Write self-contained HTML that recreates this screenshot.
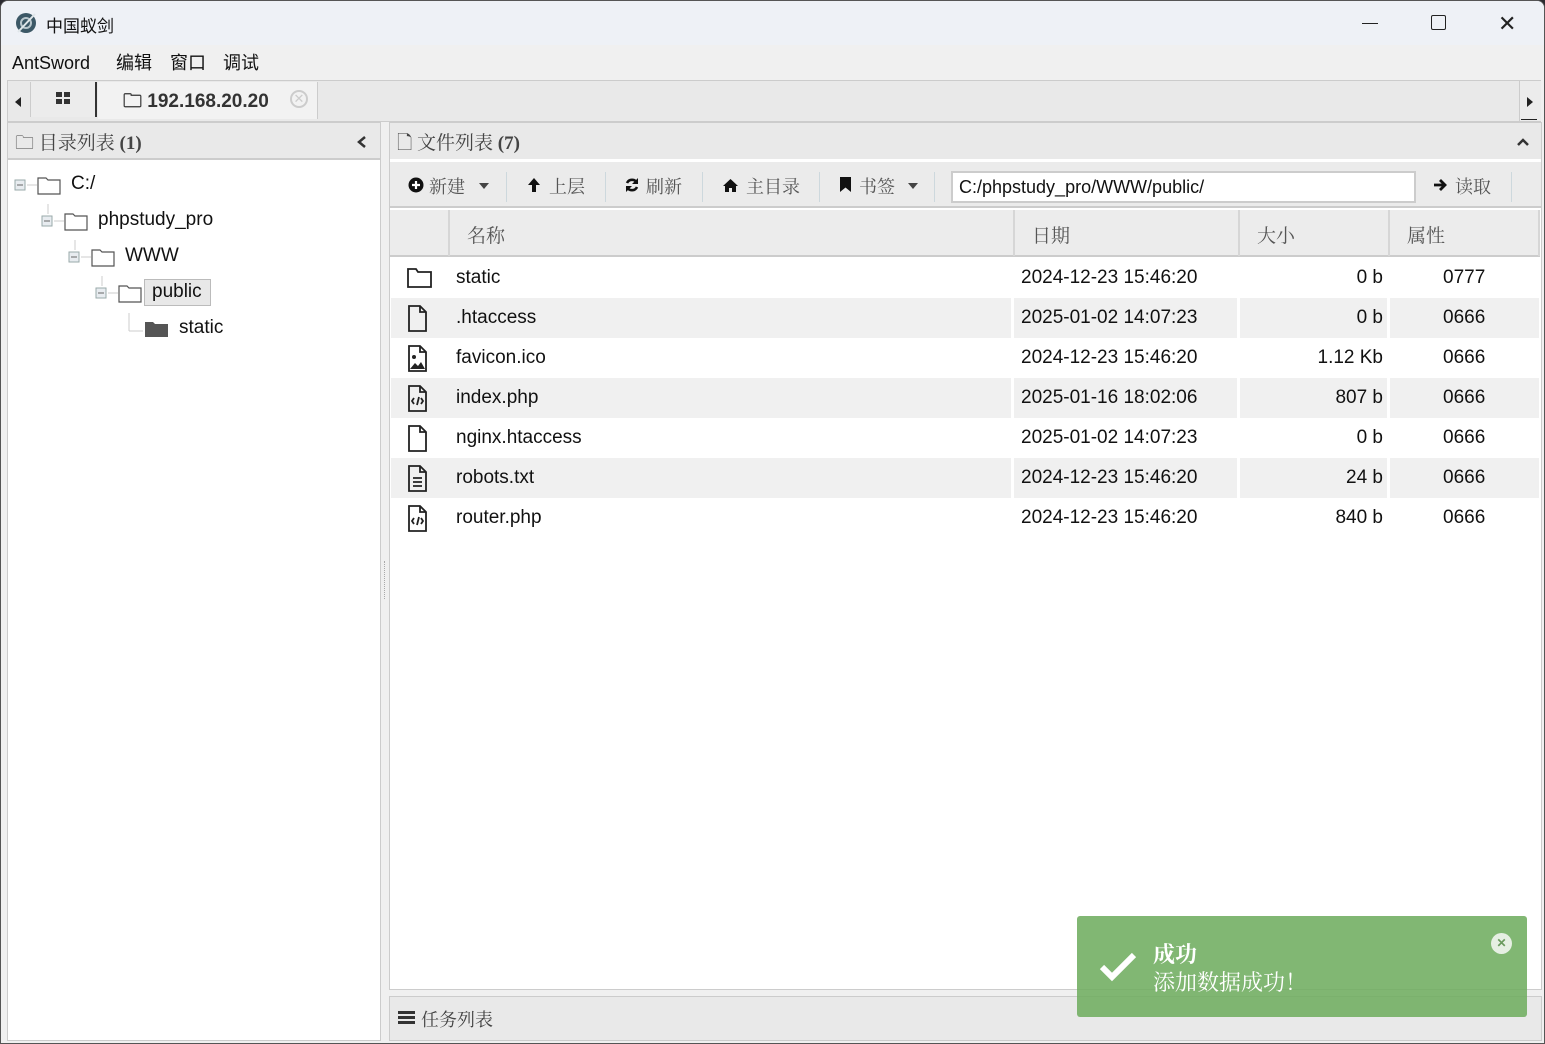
<!DOCTYPE html>
<html><head><meta charset="utf-8"><style>
*{box-sizing:border-box;margin:0;padding:0}
body{width:1545px;height:1044px;overflow:hidden;background:#2b2b30;font-family:"Liberation Sans","Noto Sans CJK SC",sans-serif;position:relative}
.a{position:absolute}
.win{left:0;top:0;width:1545px;height:1044px;background:#f0f0f0;border-radius:8px 8px 0 0;overflow:hidden;border:1px solid #555}
.serif{font-family:"Liberation Serif","Noto Serif CJK SC",serif}
.row{position:absolute;left:390px;width:1148px;height:40px;font-size:19px;color:#111}
.row span{position:absolute;top:9px}
.g{background:#f0f0f0}
.row .sep{top:0;width:3px;height:40px;background:#fff}
.m{position:absolute;top:50px;font-size:18px;line-height:24px;height:24px;color:#111}
</style></head><body>
<div class="a win">
<div class="a" style="left:0;top:0;width:1545px;height:44px;background:#eef1f6"></div>
<svg class="a" style="left:13px;top:10px" width="24" height="24" viewBox="0 0 24 24"><circle cx="12" cy="12" r="10" fill="#3c5866"/><circle cx="12" cy="12" r="5" fill="none" stroke="#b8c6cc" stroke-width="2"/><line x1="4" y1="21" x2="21" y2="3" stroke="#dfe6e9" stroke-width="2"/></svg>
<div class="a" style="left:45px;top:11px;font-size:17px;color:#111">中国蚁剑</div>
<div class="a" style="left:1361px;top:22px;width:16px;height:1px;background:#222"></div>
<div class="a" style="left:1430px;top:14px;width:15px;height:15px;border:1.5px solid #222;border-radius:2px"></div>
<div class="a" style="left:1497px;top:10px;font-size:22px;color:#222;font-weight:300">✕</div>
<div class="m" style="left:11px">AntSword</div>
<div class="m" style="left:115px">编辑</div>
<div class="m" style="left:169px">窗口</div>
<div class="m" style="left:222px">调试</div>
<div class="a" style="left:6px;top:79px;width:1534px;height:42px;background:#e9e9e9;border:1px solid #ccc"></div>
<div class="a" style="left:14px;top:96px;width:0;height:0;border-top:5px solid transparent;border-bottom:5px solid transparent;border-right:6px solid #222"></div>
<div class="a" style="left:29px;top:81px;width:67px;height:35px;background:#ececec;border-right:2px solid #333;border-left:1px solid #ccc"></div>
<div class="a" style="left:55px;top:91px;width:14px;height:12px;background:linear-gradient(90deg,#333 6px,transparent 6px,transparent 8px,#333 8px)"><div style="position:absolute;top:5px;left:0;width:14px;height:2px;background:#ececec"></div></div>
<div class="a" style="left:97px;top:81px;width:220px;height:37px;background:#f2f2f2;border-right:1px solid #ccc"></div>
<div class="a" style="left:122px;top:86px;font-size:19px;font-weight:bold;color:#333">🗀 192.168.20.20</div>
<div class="a" style="left:289px;top:89px;width:18px;height:18px;border:2px solid #ccc;border-radius:50%;color:#ccc;font-size:13px;line-height:14px;text-align:center">✕</div>
<div class="a" style="left:1518px;top:80px;width:22px;height:40px;border-left:1px solid #ccc;background:#ececec"></div>
<div class="a" style="left:1526px;top:96px;width:0;height:0;border-top:5px solid transparent;border-bottom:5px solid transparent;border-left:6px solid #222"></div>
<div class="a" style="left:1520px;top:118px;width:16px;height:1px;background:#222"></div>
<div class="a" style="left:6px;top:121px;width:374px;height:919px;border:1px solid #ccc;background:#fff"></div>
<div class="a serif" style="left:7px;top:122px;width:372px;height:37px;background:#e9e9e9;border-bottom:2px solid #ccc"></div>
<div class="a serif" style="left:14px;top:127px;font-size:19px;color:#444">🗀 目录列表 <b>(1)</b></div>
<svg class="a" style="left:355px;top:134px" width="12" height="14"><path d="M9 2L3 7l6 5" fill="none" stroke="#333" stroke-width="2.5"/></svg>
<svg class="a" style="left:0;top:160px" width="380" height="190">
<g fill="none" stroke="#ccc"><line x1="26" y1="24" x2="36" y2="24"/><line x1="47" y1="43" x2="47" y2="53"/><line x1="53" y1="60" x2="63" y2="60"/><line x1="74" y1="79" x2="74" y2="89"/><line x1="80" y1="96" x2="90" y2="96"/><line x1="101" y1="115" x2="101" y2="125"/><line x1="107" y1="132" x2="117" y2="132"/><line x1="128" y1="152" x2="128" y2="170"/><line x1="128" y1="170" x2="142" y2="170"/></g>
<g fill="#e8ecf0" stroke="#9aa"><rect x="14" y="19" width="10" height="10"/><rect x="41" y="55" width="10" height="10"/><rect x="68" y="91" width="10" height="10"/><rect x="95" y="127" width="10" height="10"/></g>
<g stroke="#666"><line x1="16" y1="24" x2="22" y2="24"/><line x1="43" y1="60" x2="49" y2="60"/><line x1="70" y1="96" x2="76" y2="96"/><line x1="97" y1="132" x2="103" y2="132"/></g>
<g fill="#fff" stroke="#555" stroke-width="1.2"><path d="M37 17h8l2 2h12v14h-22z"/><path d="M64 53h8l2 2h12v14h-22z"/><path d="M91 89h8l2 2h12v14h-22z"/><path d="M118 125h8l2 2h12v14h-22z"/></g>
<path d="M144 161h8l2 2h13v13h-23z" fill="#555"/>
</svg>
<div class="a" style="left:70px;top:172px;font-size:19px;color:#111">C:/</div>
<div class="a" style="left:97px;top:208px;font-size:19px;color:#111">phpstudy_pro</div>
<div class="a" style="left:124px;top:244px;font-size:19px;color:#111">WWW</div>
<div class="a" style="left:143px;top:278px;width:67px;height:27px;background:#e8e8e8;border:1px solid #bbb"></div>
<div class="a" style="left:151px;top:280px;font-size:19px;color:#111">public</div>
<div class="a" style="left:178px;top:316px;font-size:19px;color:#111">static</div>
<div class="a" style="left:383px;top:560px;width:2px;height:38px;border-left:1px dotted #aaa"></div>
<div class="a" style="left:388px;top:121px;width:1153px;height:868px;border:1px solid #ccc;background:#fff"></div>
<div class="a" style="left:389px;top:122px;width:1151px;height:36px;background:#e9e9e9"></div>
<div class="a serif" style="left:396px;top:127px;font-size:19px;color:#444">🗋 文件列表 <b>(7)</b></div>
<svg class="a" style="left:1515px;top:136px" width="14" height="10"><path d="M2 8l5-5 5 5" fill="none" stroke="#333" stroke-width="2.5"/></svg>
<div class="a" style="left:389px;top:158px;width:1151px;height:3px;background:#fff"></div>
<div class="a" style="left:389px;top:161px;width:1151px;height:46px;background:#ebebeb;border-bottom:2px solid #ccc"></div>
<svg class="a" style="left:407px;top:176px" width="16" height="16"><circle cx="8" cy="8" r="7.5" fill="#111"/><path d="M4 8h8M8 4v8" stroke="#fff" stroke-width="2.2"/></svg>
<div class="a serif" style="left:428px;top:172px;font-size:18px;color:#555">新建</div>
<div class="a" style="left:478px;top:182px;width:0;height:0;border-left:5px solid transparent;border-right:5px solid transparent;border-top:6px solid #444"></div>
<div class="a" style="left:505px;top:171px;width:1px;height:30px;background:#cdd8dd"></div>
<svg class="a" style="left:525px;top:176px" width="16" height="16"><path d="M8 1L2 8h4v7h4V8h4z" fill="#111"/></svg>
<div class="a serif" style="left:548px;top:172px;font-size:18px;color:#555">上层</div>
<div class="a" style="left:604px;top:171px;width:1px;height:30px;background:#cdd8dd"></div>
<svg class="a" style="left:623px;top:176px" width="16" height="16"><path d="M13 6A5.5 5.5 0 0 0 3 6M3 10a5.5 5.5 0 0 0 10 0" fill="none" stroke="#111" stroke-width="2.6"/><path d="M14 1v6h-6z M2 15v-6h6z" fill="#111"/></svg>
<div class="a serif" style="left:645px;top:172px;font-size:18px;color:#555">刷新</div>
<div class="a" style="left:701px;top:171px;width:1px;height:30px;background:#cdd8dd"></div>
<svg class="a" style="left:721px;top:177px" width="17" height="14"><path d="M8.5 1L1 8h2v6h4v-4h3v4h4V8h2z" fill="#111"/></svg>
<div class="a serif" style="left:745px;top:172px;font-size:18px;color:#555">主目录</div>
<div class="a" style="left:818px;top:171px;width:1px;height:30px;background:#cdd8dd"></div>
<div class="a" style="left:839px;top:176px;width:11px;height:15px;background:#111;clip-path:polygon(0 0,100% 0,100% 100%,50% 70%,0 100%)"></div>
<div class="a serif" style="left:858px;top:172px;font-size:18px;color:#555">书签</div>
<div class="a" style="left:907px;top:182px;width:0;height:0;border-left:5px solid transparent;border-right:5px solid transparent;border-top:6px solid #444"></div>
<div class="a" style="left:933px;top:171px;width:1px;height:30px;background:#cdd8dd"></div>
<div class="a" style="left:950px;top:170px;width:465px;height:32px;background:#fff;border:2px solid #ccc;font-size:18px;color:#111;padding:4px 6px">C:/phpstudy_pro/WWW/public/</div>
<svg class="a" style="left:1432px;top:177px" width="16" height="14"><path d="M1 7h9M7 2l5 5-5 5" fill="none" stroke="#111" stroke-width="2.8"/></svg>
<div class="a serif" style="left:1454px;top:172px;font-size:18px;color:#555">读取</div>
<div class="a" style="left:1510px;top:171px;width:1px;height:30px;background:#cdd8dd"></div>
<div class="a" style="left:389px;top:209px;width:1150px;height:47px;background:#ececec;border-bottom:2px solid #ccc"></div>
<div class="a" style="left:447px;top:209px;width:2px;height:46px;background:#d6d6d6"></div>
<div class="a" style="left:1012px;top:209px;width:2px;height:46px;background:#d6d6d6"></div>
<div class="a" style="left:1237px;top:209px;width:2px;height:46px;background:#d6d6d6"></div>
<div class="a" style="left:1387px;top:209px;width:2px;height:46px;background:#d6d6d6"></div>
<div class="a" style="left:1537px;top:209px;width:2px;height:46px;background:#d6d6d6"></div>
<div class="a serif" style="left:466px;top:220px;font-size:19px;color:#555">名称</div>
<div class="a serif" style="left:1031px;top:220px;font-size:19px;color:#555">日期</div>
<div class="a serif" style="left:1256px;top:220px;font-size:19px;color:#555">大小</div>
<div class="a serif" style="left:1406px;top:220px;font-size:19px;color:#555">属性</div>
<div class="row" style="top:257px"><span style="left:65px">static</span><span style="left:630px">2024-12-23 15:46:20</span><span style="right:156px">0 b</span><span style="left:1052px">0777</span></div>
<div class="row g" style="top:297px"><div class="a sep" style="left:620px"></div><div class="a sep" style="left:846px"></div><div class="a sep" style="left:996px"></div><span style="left:65px">.htaccess</span><span style="left:630px">2025-01-02 14:07:23</span><span style="right:156px">0 b</span><span style="left:1052px">0666</span></div>
<div class="row" style="top:337px"><span style="left:65px">favicon.ico</span><span style="left:630px">2024-12-23 15:46:20</span><span style="right:156px">1.12 Kb</span><span style="left:1052px">0666</span></div>
<div class="row g" style="top:377px"><div class="a sep" style="left:620px"></div><div class="a sep" style="left:846px"></div><div class="a sep" style="left:996px"></div><span style="left:65px">index.php</span><span style="left:630px">2025-01-16 18:02:06</span><span style="right:156px">807 b</span><span style="left:1052px">0666</span></div>
<div class="row" style="top:417px"><span style="left:65px">nginx.htaccess</span><span style="left:630px">2025-01-02 14:07:23</span><span style="right:156px">0 b</span><span style="left:1052px">0666</span></div>
<div class="row g" style="top:457px"><div class="a sep" style="left:620px"></div><div class="a sep" style="left:846px"></div><div class="a sep" style="left:996px"></div><span style="left:65px">robots.txt</span><span style="left:630px">2024-12-23 15:46:20</span><span style="right:156px">24 b</span><span style="left:1052px">0666</span></div>
<div class="row" style="top:497px"><span style="left:65px">router.php</span><span style="left:630px">2024-12-23 15:46:20</span><span style="right:156px">840 b</span><span style="left:1052px">0666</span></div>
<svg class="a" style="left:400px;top:257px" width="40" height="280" fill="none" stroke="#222" stroke-width="1.8">
<path d="M7 11h8l2 3h13v15h-23z"/>
<path d="M8 48h11l6 6v19h-17z M19 48v6h6"/>
<path d="M8 88h11l6 6v19h-17z M19 88v6h6"/><circle cx="13" cy="99" r="2" fill="#222" stroke="none"/><path d="M9 111l5-6 3 3 3-4 4 7z" fill="#222" stroke="none"/>
<path d="M8 128h11l6 6v19h-17z M19 128v6h6 M13 140l-2 3 2 3 M20 140l2 3-2 3 M18 139l-2 8" />
<path d="M8 168h11l6 6v19h-17z M19 168v6h6"/>
<path d="M8 208h11l6 6v19h-17z M19 208v6h6 M12 220h9 M12 224h9 M12 228h9" />
<path d="M8 248h11l6 6v19h-17z M19 248v6h6 M13 260l-2 3 2 3 M20 260l2 3-2 3 M18 259l-2 8" />
</svg>
<div class="a" style="left:388px;top:995px;width:1153px;height:45px;background:#e9e9e9;border:1px solid #ccc"></div>
<div class="a" style="left:397px;top:1010px;width:17px;height:14px;background:repeating-linear-gradient(#333 0 3px,transparent 3px 5px)"></div>
<div class="a serif" style="left:420px;top:1005px;font-size:18px;color:#444">任务列表</div>
<div class="a" style="left:1076px;top:915px;width:450px;height:101px;background:rgba(112,173,96,0.88);border-radius:3px"></div>
<svg class="a" style="left:1097px;top:948px" width="40" height="34"><path d="M4 18l10 10 22-22" fill="none" stroke="#fff" stroke-width="6"/></svg>
<div class="a serif" style="left:1152px;top:937px;font-size:22px;font-weight:bold;color:#fff">成功</div>
<div class="a serif" style="left:1152px;top:965px;font-size:22px;color:#fff">添加数据成功！</div>
<div class="a" style="left:1490px;top:932px;width:21px;height:21px;border-radius:50%;background:#e6efe3;color:#6a9a5e;font:bold 12px/21px sans-serif;text-align:center">✕</div>
</div>
</body></html>
